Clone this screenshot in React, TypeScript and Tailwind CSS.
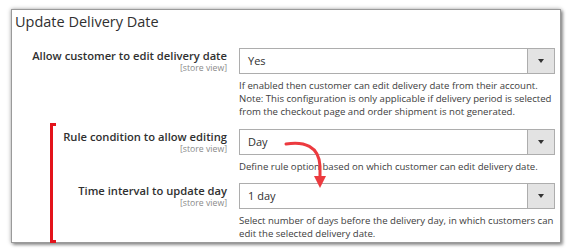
const ROWS = [
  {
    label: "Allow customer to edit delivery date",
    value: "Yes",
    notes: [
      "If enabled then customer can edit delivery date from their account.",
      "Note: This configuration is only applicable if delivery period is selected",
      "from the checkout page and order shipment is not generated.",
    ],
    mt: "mt-[17px]",
  },
  {
    label: "Rule condition to allow editing",
    value: "Day",
    notes: ["Define rule option based on which customer can edit delivery date."],
    mt: "mt-[11px]",
  },
  {
    label: "Time interval to update day",
    value: "1 day",
    notes: [
      "Select number of days before the delivery day, in which customers can",
      "edit the selected delivery date.",
    ],
    mt: "mt-[10px]",
  },
];

function Select({ value }: { value: string }) {
  return (
    <div className="flex h-[26px] w-[316px] border border-[#adadad] bg-white">
      <div className="flex flex-1 items-center pl-[8px] text-[11px] text-[#303030]">
        {value}
      </div>
      <div className="flex w-[27px] items-center justify-center border-l border-[#adadad] bg-[#e3e3e3]">
        <span className="h-0 w-0 border-x-[3px] border-t-[4px] border-x-transparent border-t-[#333]" />
      </div>
    </div>
  );
}

export default function App() {
  return (
    <div className="h-[251px] w-[572px] bg-white pl-[11px] pt-[9px] font-['Open_Sans',sans-serif]">
      <div className="relative h-[234px] w-[550px] border border-[#9a9a9a] bg-white shadow-[0_0_4px_rgba(0,0,0,0.35),2px_2px_3px_rgba(0,0,0,0.35)]">
        <h1 className="pl-[3px] pt-[3px] text-[14.5px] leading-[18px] text-[#303030]">
          Update Delivery Date
        </h1>

        {ROWS.map((r) => (
          <div key={r.label} className={`flex gap-[12px] ${r.mt}`}>
            <div className="w-[215px] pt-[1px] text-right">
              <div className="whitespace-nowrap text-[11.2px] font-semibold leading-[14px] text-[#303030]">
                {r.label}
              </div>
              <div className="text-[8.7px] leading-[11px] text-[#8a8a8a]">[store view]</div>
            </div>
            <div>
              <Select value={r.value} />
              <div className="mt-[5px] whitespace-nowrap text-[9.6px] leading-[13px] text-[#404040]">
                {r.notes.map((n) => (
                  <div key={n}>{n}</div>
                ))}
              </div>
            </div>
          </div>
        ))}

        {/* red bracket */}
        <div className="absolute left-[38px] top-[113px] h-[120px] w-[6px] border-y-[3px] border-l-[3px] border-[#e3131b]" />

        {/* curved arrow */}
        <svg
          className="absolute left-[270px] top-[128px]"
          width="60"
          height="55"
          viewBox="0 0 60 55"
        >
          <path
            d="M4 6 C22 3 37 8 38 28 L38 40"
            fill="none"
            stroke="#ec3a3f"
            strokeWidth="3"
            strokeLinecap="round"
          />
          <polygon points="32,38 44,38 38,50" fill="#ec3a3f" />
        </svg>
      </div>
    </div>
  );
}
